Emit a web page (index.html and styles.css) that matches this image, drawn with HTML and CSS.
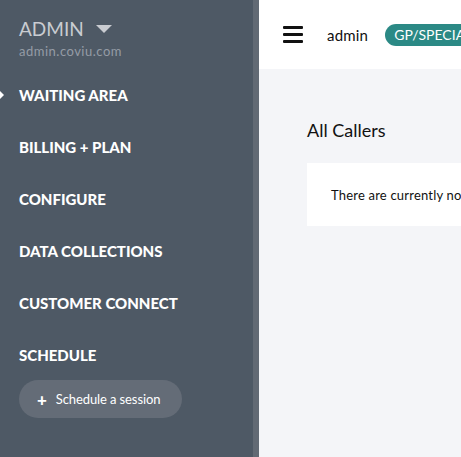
FILE: index.html
```html
<!DOCTYPE html>
<html>
<head>
  <meta charset='utf-8'>
  <title>Coviu admin</title>
  <meta name='viewport' content='width=device-width, initial-scale=1'>
  <link rel="stylesheet" href="styles.css">
</head>
<body>
  <aside class="sidebar">
    <div class="account">
      <div class="account-name">ADMIN <span class="caret"></span></div>
      <div class="account-host">admin.coviu.com</div>
    </div>
    <nav class="nav">
      <a class="nav-item active">WAITING AREA</a>
      <a class="nav-item">BILLING + PLAN</a>
      <a class="nav-item">CONFIGURE</a>
      <a class="nav-item">DATA COLLECTIONS</a>
      <a class="nav-item">CUSTOMER CONNECT</a>
      <a class="nav-item">SCHEDULE</a>
    </nav>
    <button class="schedule-btn"><span class="plus">+</span>Schedule a session</button>
  </aside>
  <div class="scroll-strip"></div>
  <main class="main">
    <header class="topbar">
      <button class="burger" aria-label="menu">
        <span></span><span></span><span></span>
      </button>
      <span class="user">admin</span>
      <span class="badge">GP/SPECIALIST</span>
    </header>
    <section class="content">
      <h2>All Callers</h2>
      <div class="card">There are currently no callers waiting.</div>
    </section>
  </main>
</body>
</html>
```

FILE: styles.css
```css
*, *:before, *:after {
  box-sizing: border-box;
}
html, body {
  margin: 0;
  padding: 0;
  height: 100%;
  overflow: hidden;
  font-family: Lato, "Open Sans", sans-serif;
}
body {
  display: flex;
  background: #f4f5f8;
}
.sidebar {
  width: 253px;
  flex-shrink: 0;
  background: #4e5965;
  padding: 18px 0 0 19px;
}
.account-name {
  color: #c9ccd1;
  font-size: 19px;
  line-height: 22px;
  display: flex;
  align-items: center;
}
.caret {
  display: inline-block;
  margin-left: 12px;
  border-left: 8px solid transparent;
  border-right: 8px solid transparent;
  border-top: 8px solid #c9ccd1;
}
.account-host {
  color: #959ca5;
  font-size: 13px;
  letter-spacing: .5px;
  margin-top: 3px;
}
.nav {
  margin-top: 10px;
  display: flex;
  flex-direction: column;
}
.nav-item {
  color: #fff;
  font-weight: 900;
  font-size: 15px;
  letter-spacing: 0;
  line-height: 52px;
  position: relative;
}
.nav-item.active:before {
  content: "";
  position: absolute;
  left: -19px;
  top: 22px;
  border-top: 4px solid transparent;
  border-bottom: 4px solid transparent;
  border-left: 4px solid #fff;
}
.schedule-btn {
  margin-top: -1px;
  height: 38px;
  width: 163px;
  border: none;
  border-radius: 19px;
  background: #646c77;
  color: #fff;
  font-family: inherit;
  font-size: 13px;
  letter-spacing: -.1px;
  text-align: left;
  padding: 0 0 0 18px;
  display: flex;
  align-items: center;
}
.plus {
  font-weight: 900;
  font-size: 17px;
  margin-right: 9px;
}
.scroll-strip {
  width: 6px;
  flex-shrink: 0;
  background: #626a74;
}
.main {
  flex: 1;
  min-width: 0;
  overflow: hidden;
}
.topbar {
  height: 69px;
  background: #fff;
  display: flex;
  align-items: center;
  padding-left: 24px;
  white-space: nowrap;
}
.burger {
  flex-shrink: 0;
  width: 20px;
  height: 17px;
  padding: 0;
  border: none;
  background: transparent;
  display: flex;
  flex-direction: column;
  justify-content: space-between;
}
.burger span {
  display: block;
  width: 20px;
  height: 3px;
  background: #111;
  border-radius: 1px;
}
.user {
  margin-left: 24px;
  font-size: 15px;
  letter-spacing: .2px;
  color: #111;
}
.badge {
  margin-left: 17px;
  background: #2b8985;
  color: #fff;
  font-size: 14px;
  padding: 2px 9px;
  border-radius: 11px;
  line-height: 18px;
}
.content {
  padding: 48px 0 0 48px;
}
.content h2 {
  margin: 0;
  font-weight: 400;
  font-size: 18px;
  color: #111;
  line-height: 26px;
}
.card {
  margin-top: 20px;
  background: #fff;
  height: 63px;
  width: 400px;
  padding-left: 24px;
  display: flex;
  align-items: center;
  font-size: 13px;
  letter-spacing: .2px;
  color: #111;
  white-space: nowrap;
}
```
